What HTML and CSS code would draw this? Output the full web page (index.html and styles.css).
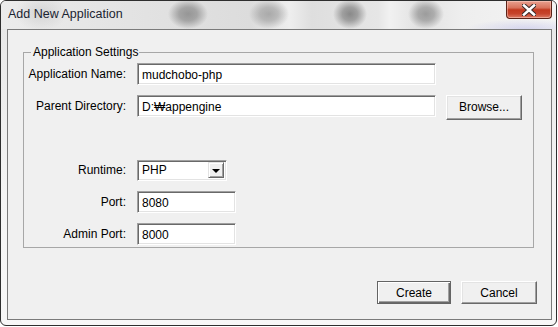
FILE: index.html
```html
<!DOCTYPE html>
<html lang="en">
  <head>
    <meta charset="UTF-8" />
    <title>Add New Application</title>
    <link rel="stylesheet" href="styles.css">
  </head>
  <body>
    <div class="window">
      <!-- Title bar -->
      <div class="titlebar">
        <span class="title">Add New Application</span>
        <button class="close" aria-label="Close">
          <svg width="14" height="12" viewBox="0 0 14 12">
            <path d="M2 1.5 L12 10.5 M12 1.5 L2 10.5" stroke="#3b2a28" stroke-width="4.6" stroke-linecap="square" fill="none" />
            <path d="M2 1.5 L12 10.5 M12 1.5 L2 10.5" stroke="#ffffff" stroke-width="2.6" stroke-linecap="square" fill="none" />
          </svg>
        </button>
      </div>
      <!-- Dialog body -->
      <div class="client">
        <fieldset class="group">
          <legend>Application Settings</legend>
          <div class="row">
            <label for="appName">Application Name:</label>
            <input type="text" id="appName" class="field wide" value="mudchobo-php" />
          </div>
          <div class="row">
            <label for="parentDir">Parent Directory:</label>
            <input type="text" id="parentDir" class="field wide" value="D:₩appengine" />
            <button class="btn browse">Browse...</button>
          </div>
          <div class="row row-spaced">
            <label>Runtime:</label>
            <div class="combo">
              <span class="combo-text">PHP</span>
              <span class="combo-btn"><span class="arrow"></span></span>
            </div>
          </div>
          <div class="row">
            <label for="port">Port:</label>
            <input type="text" id="port" class="field short" value="8080" />
          </div>
          <div class="row">
            <label for="adminPort">Admin Port:</label>
            <input type="text" id="adminPort" class="field short" value="8000" />
          </div>
        </fieldset>
        <div class="actions">
          <button class="btn default create">Create</button>
          <button class="btn cancel">Cancel</button>
        </div>
      </div>
    </div>
  </body>
</html>
```

FILE: styles.css
```css
* {
  box-sizing: border-box;
}

body {
  margin: 0;
  background-color: #fff;
  font-family: "Liberation Sans", Arial, sans-serif;
  font-size: 12px;
  color: #000;
}

.window {
  width: 557px;
  height: 326px;
  border: 1px solid #2e2e2e;
  border-radius: 6px;
  overflow: hidden;
  display: flex;
  flex-direction: column;
  background: linear-gradient(#e6e6e6, #f4f4f4 60%, #f7f7f7);
}

/* Blurred glass frame with the desktop showing through */
.titlebar {
  height: 28px;
  display: flex;
  align-items: flex-start;
  padding-left: 7px;
  background:
    radial-gradient(20px 15px at 187px 13px, rgba(125, 125, 125, 0.75) 0, rgba(125, 125, 125, 0.6) 45%, transparent 100%),
    radial-gradient(20px 15px at 268px 13px, rgba(130, 130, 130, 0.6) 0, rgba(130, 130, 130, 0.45) 45%, transparent 100%),
    radial-gradient(17px 15px at 349px 13px, rgba(115, 115, 115, 0.8) 0, rgba(115, 115, 115, 0.6) 45%, transparent 100%),
    radial-gradient(18px 15px at 425px 13px, rgba(125, 125, 125, 0.7) 0, rgba(125, 125, 125, 0.55) 45%, transparent 100%),
    radial-gradient(26px 18px at 40px 12px, rgba(150, 150, 150, 0.25), transparent),
    radial-gradient(60px 10px at 525px 28px, rgba(190, 190, 235, 0.55), transparent),
    linear-gradient(90deg, #ececec 0, #e4e4e4 20%, #dcdcdc 45%, #eeeeee 52%, #dedede 56%, #e6e6e6 68%, #f1f1f1 70%, #e2e2e2 75%, #eeeeee 83%, #f4f4f4 100%);
}

.title {
  margin-top: 6px;
  font-size: 12.5px;
  line-height: 15px;
  color: #1b2431;
}

.close {
  margin-left: auto;
  margin-right: 4px;
  width: 46px;
  height: 18px;
  padding: 0;
  border: 1px solid #5b2318;
  border-top: none;
  border-radius: 0 0 4px 4px;
  background: linear-gradient(#e9a190 0%, #d8735d 40%, #c2391f 52%, #c6442c 75%, #dc7c66 100%);
  box-shadow: inset 0 0 0 1px rgba(255, 220, 210, 0.45);
  display: flex;
  align-items: center;
  justify-content: center;
}

.close svg {
  display: block;
}

.client {
  flex: 1;
  margin: 0 4px 5px 6px;
  border: 1px solid #7a7a7a;
  background-color: #f0f0f0;
  display: flex;
  flex-direction: column;
}

.group {
  margin: 15px 17px 0 15px;
  height: 203px;
  padding: 4px 0 0;
  border: 1px solid #a7a7a7;
  display: flex;
  flex-direction: column;
  gap: 10px;
}

.group legend {
  margin-left: 7px;
  padding: 0 1px 0 2px;
  line-height: 14px;
}

.row {
  height: 22px;
  display: flex;
  align-items: center;
}

.row-spaced {
  margin-top: 32px;
}

.row label {
  width: 102px;
  margin-right: 11px;
  text-align: right;
  white-space: nowrap;
}

/* Sunken edit box */
.field,
.combo {
  height: 22px;
  border: 1px solid;
  border-color: #a0a0a0 #fff #fff #a0a0a0;
  box-shadow: inset 1px 1px 0 #696969, inset -1px -1px 0 #e3e3e3;
  background-color: #fff;
  font-family: inherit;
  font-size: 12px;
  color: #000;
  padding: 1px 3px 0 4px;
  outline: none;
}

.field.wide {
  width: 299px;
}

.field.short {
  width: 99px;
}

.combo {
  width: 90px;
  height: 21px;
  display: flex;
  align-items: center;
  padding: 1px 2px 1px 4px;
}

.combo-text {
  flex: 1;
}

.combo-btn {
  width: 16px;
  height: 16px;
  background-color: #f0f0f0;
  border: 1px solid;
  border-color: #e3e3e3 #696969 #696969 #e3e3e3;
  box-shadow: inset 1px 1px 0 #fff, inset -1px -1px 0 #a0a0a0;
  display: flex;
  align-items: center;
  justify-content: center;
}

.arrow {
  width: 0;
  height: 0;
  border-left: 4px solid transparent;
  border-right: 4px solid transparent;
  border-top: 4px solid #000;
  margin-top: 1px;
}

/* Raised push button */
.btn {
  height: 23px;
  padding: 0;
  background-color: #f0f0f0;
  border: 1px solid;
  border-color: #fff #696969 #696969 #fff;
  box-shadow: inset -1px -1px 0 #a0a0a0, inset 1px 1px 0 #e3e3e3;
  font-family: inherit;
  font-size: 12px;
  color: #000;
}

.btn.default {
  border-color: #646464;
  box-shadow: inset 1px 1px 0 #fff, inset -1px -1px 0 #696969, inset -2px -2px 0 #a0a0a0;
}

.browse {
  width: 76px;
  height: 25px;
  margin-left: 10px;
  margin-top: 2px;
}

.actions {
  display: flex;
  justify-content: flex-end;
  gap: 10px;
  margin-top: 33px;
  padding-right: 14px;
}

.create {
  width: 74px;
}

.cancel {
  width: 76px;
}
```
